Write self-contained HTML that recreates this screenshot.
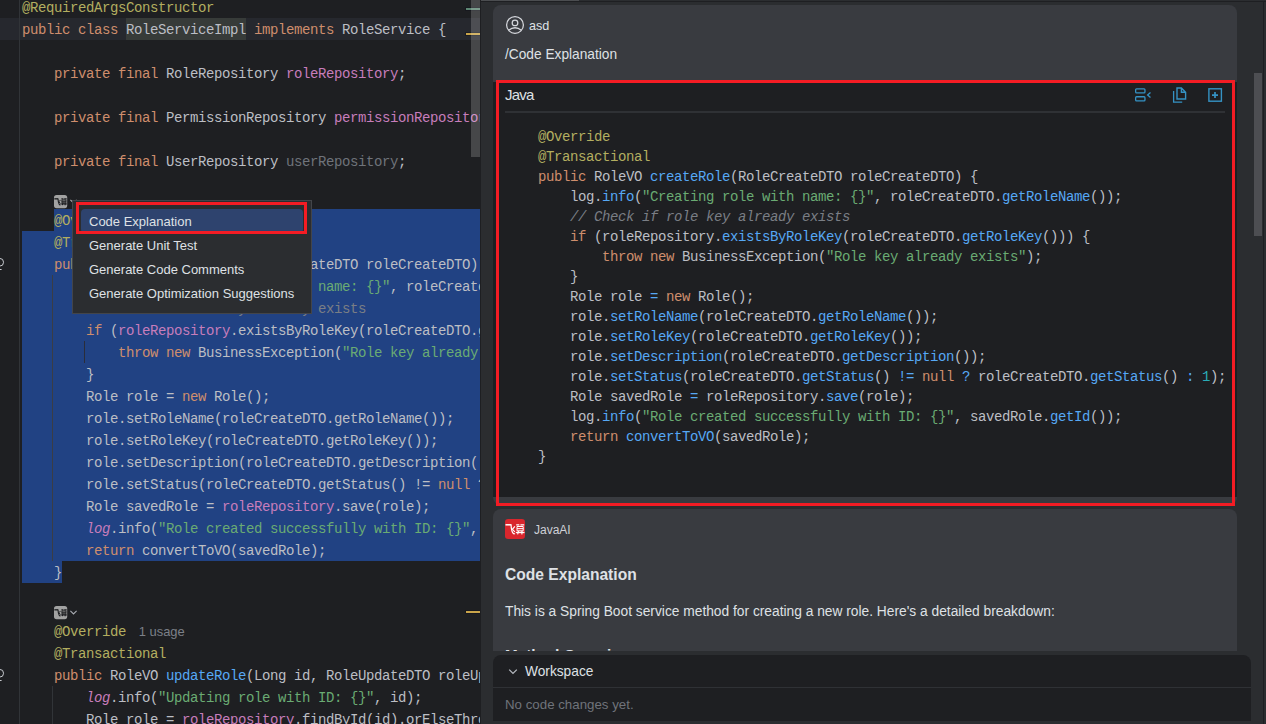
<!DOCTYPE html>
<html>
<head>
<meta charset="utf-8">
<title>IDE</title>
<style>
html,body{margin:0;padding:0;font-family:"Liberation Sans",sans-serif;}
body{width:1266px;height:724px;overflow:hidden;background:#2b2d30;position:relative;font-family:"Liberation Sans",sans-serif;color:#dfe1e5;}
.abs{position:absolute;}
/* ---------- left editor ---------- */
#ed{position:absolute;left:0;top:0;width:480px;height:724px;background:#1e1f22;overflow:hidden;}
.ln{position:absolute;left:22px;height:22px;line-height:22px;white-space:pre;font-family:"Liberation Mono",monospace;font-size:14px;letter-spacing:-0.4014px;color:#bcbec4;}
.kw{color:#cf8e6d;}
.an{color:#b3ae60;}
.fd{color:#c77dbb;}
.sf{color:#c77dbb;font-style:italic;}
.un{color:#6f737a;}
.fn{color:#56a8f5;}
.st{color:#6aab73;}
.cm{color:#7a7e85;}
.nu{color:#2aacb8;}
.op{color:#56a8f5;}
.sel{position:absolute;background:#214283;}
.guide{position:absolute;width:1px;background:#313438;}
/* ---------- popup ---------- */
#pop{position:absolute;left:72px;top:200px;width:240px;height:113.5px;box-sizing:border-box;background:#2b2d30;border:1px solid #43454a;}
.mi{position:absolute;left:17px;font-size:13px;line-height:24px;height:24px;color:#dfe1e5;white-space:pre;}
/* ---------- right panel ---------- */
#rp{position:absolute;left:480px;top:0;width:786px;height:724px;background:#2b2d30;overflow:hidden;}
.bub{position:absolute;background:#393b40;}
.rl{position:absolute;left:58px;height:20px;line-height:20px;white-space:pre;font-family:"Liberation Mono",monospace;font-size:14px;letter-spacing:-0.4014px;color:#bcbec4;}
.rl .cm{font-style:italic;}
.t{position:absolute;white-space:pre;}
</style>
</head>
<body>
<svg width="0" height="0" style="position:absolute">
  <defs>
    <g id="fs" fill="none" stroke-linecap="butt" stroke-linejoin="miter">
      <path d="M0.5 5.8 H6.2" stroke-width="1.5"/>
      <path d="M6 5.4 C6.2 9 6.6 12.4 8 14.2 C8.6 15 9.3 15.1 10 14.6" stroke-width="1.2"/>
      <path d="M9.9 7.4 L7.4 10.3 L9.9 12.9" stroke-width="1.1"/>
      <path d="M11.2 5.8 H14.4 M15.4 5.8 H19.2" stroke-width="1.3"/>
      <path d="M12 7.5 H18.2 V11.8 H12 Z M12 9.65 H18.2" stroke-width="1"/>
      <path d="M10.8 13.5 H19.5" stroke-width="1.3"/>
      <path d="M13.6 12 L12.6 15.4 M16.9 12 V15.4" stroke-width="1.1"/>
    </g>
    <g id="fs2" fill="none" stroke-linecap="butt" stroke-linejoin="miter">
      <path d="M0.5 5.8 H6.2" stroke-width="2"/>
      <path d="M6 5.4 C6.2 9 6.6 12.4 8 14.2 C8.6 15 9.3 15.1 10 14.6" stroke-width="1.7"/>
      <path d="M9.9 7.4 L7.4 10.3 L9.9 12.9" stroke-width="1.5"/>
      <path d="M11.2 5.8 H14.4 M15.4 5.8 H19.2" stroke-width="1.8"/>
      <path d="M12 7.5 H18.2 V11.8 H12 Z M12 9.65 H18.2" stroke-width="1.4"/>
      <path d="M10.8 13.5 H19.5" stroke-width="1.8"/>
      <path d="M13.6 12 L12.6 15.4 M16.9 12 V15.4" stroke-width="1.6"/>
    </g>
  </defs>
</svg>

<!-- ================= LEFT EDITOR ================= -->
<div id="ed">
  <!-- current line -->
  <div class="abs" style="left:0;top:18px;width:480px;height:22px;background:#26282e;"></div>
  <!-- identifier highlight -->
  <div class="abs" style="left:126px;top:18px;width:120px;height:22px;background:#373b39;"></div>
  <!-- gutter line -->
  <div class="abs" style="left:19px;top:0;width:1px;height:724px;background:#313438;"></div>

  <!-- selection -->
  <div class="sel" style="left:54px;top:209px;width:426px;height:22px;"></div>
  <div class="sel" style="left:22px;top:231px;width:458px;height:330px;"></div>
  <div class="sel" style="left:22px;top:561px;width:40px;height:22px;"></div>

  <!-- indent guides -->
  <div class="guide" style="left:52px;top:275px;height:286px;background:#3a3d45;"></div>
  <div class="guide" style="left:84px;top:341px;height:22px;background:#2a2d3a;"></div>
  <div class="guide" style="left:52px;top:686px;height:38px;"></div>

<div class="ln" style="top:-3px"><span class="an">@RequiredArgsConstructor</span></div>
<div class="ln" style="top:19px"><span class="kw">public class </span>RoleServiceImpl <span class="kw">implements </span>RoleService {</div>
<div class="ln" style="top:63px"><span class="kw">    private final </span>RoleRepository <span class="fd">roleRepository</span>;</div>
<div class="ln" style="top:107px"><span class="kw">    private final </span>PermissionRepository <span class="fd">permissionRepository</span>;</div>
<div class="ln" style="top:151px"><span class="kw">    private final </span>UserRepository <span class="un">userRepository</span>;</div>
<div class="ln" style="top:210px"><span class="an">    @Override</span></div>
<div class="ln" style="top:232px"><span class="an">    @Transactional</span></div>
<div class="ln" style="top:254px"><span class="kw">    public </span>RoleVO <span class="fn">createRole</span>(RoleCreateDTO roleCreateDTO) {</div>
<div class="ln" style="top:276px"><span class="sf">        log</span>.info(<span class="st">"Creating role with name: {}"</span>, roleCreateDTO.getRoleName());</div>
<div class="ln" style="top:298px"><span class="cm">        // Check if role key already exists</span></div>
<div class="ln" style="top:320px"><span class="kw">        if </span>(<span class="fd">roleRepository</span>.existsByRoleKey(roleCreateDTO.getRoleKey())) {</div>
<div class="ln" style="top:342px"><span class="kw">            throw new </span>BusinessException(<span class="st">"Role key already exists"</span>);</div>
<div class="ln" style="top:364px">        }</div>
<div class="ln" style="top:386px">        Role role = <span class="kw">new </span>Role();</div>
<div class="ln" style="top:408px">        role.setRoleName(roleCreateDTO.getRoleName());</div>
<div class="ln" style="top:430px">        role.setRoleKey(roleCreateDTO.getRoleKey());</div>
<div class="ln" style="top:452px">        role.setDescription(roleCreateDTO.getDescription());</div>
<div class="ln" style="top:474px">        role.setStatus(roleCreateDTO.getStatus() != <span class="kw">null </span>? roleCreateDTO.getStatus() : <span class="nu">1</span>);</div>
<div class="ln" style="top:496px">        Role savedRole = <span class="fd">roleRepository</span>.save(role);</div>
<div class="ln" style="top:518px"><span class="sf">        log</span>.info(<span class="st">"Role created successfully with ID: {}"</span>, savedRole.getId());</div>
<div class="ln" style="top:540px"><span class="kw">        return </span>convertToVO(savedRole);</div>
<div class="ln" style="top:562px">    }</div>
<div class="ln" style="top:621px"><span class="an">    @Override</span></div>
<div class="ln" style="top:643px"><span class="an">    @Transactional</span></div>
<div class="ln" style="top:665px"><span class="kw">    public </span>RoleVO <span class="fn">updateRole</span>(Long id, RoleUpdateDTO roleUpdateDTO) {</div>
<div class="ln" style="top:687px"><span class="sf">        log</span>.info(<span class="st">"Updating role with ID: {}"</span>, id);</div>
<div class="ln" style="top:709px">        Role role = <span class="fd">roleRepository</span>.findById(id).orElseThrow(() -&gt; new BusinessException("Role not found"));</div>

  <!-- "1 usage" inlay -->
  <div class="t" style="left:138.7px;top:621.51px;font-size:12.95px;line-height:20px;color:#7c8088;">1 usage</div>

  <!-- inlay icons -->
  <svg class="abs" style="left:54px;top:195px" width="26" height="14" viewBox="0 0 26 14"><rect x="0" y="0" width="13.2" height="13.2" rx="2.6" fill="#a2a2a2"/><g transform="scale(0.66)" stroke="#1c1d20"><use href="#fs2"/></g><path d="M16.4 4.9 L19.5 7.9 L22.6 4.9" fill="none" stroke="#a9acb3" stroke-width="1.1"/></svg>
  <svg class="abs" style="left:54px;top:606px" width="26" height="14" viewBox="0 0 26 14"><rect x="0" y="0" width="13.2" height="13.2" rx="2.6" fill="#a2a2a2"/><g transform="scale(0.66)" stroke="#1c1d20"><use href="#fs2"/></g><path d="M16.4 4.9 L19.5 7.9 L22.6 4.9" fill="none" stroke="#a9acb3" stroke-width="1.1"/></svg>

  <svg class="abs" style="left:0;top:255px" width="8" height="18" viewBox="0 0 8 18"><circle cx="-0.3" cy="7.25" r="3.85" fill="none" stroke="#c8cacf" stroke-width="1"/><path d="M0 14.5 H1.6" stroke="#c8cacf" stroke-width="1"/></svg>
  <svg class="abs" style="left:0;top:666px" width="8" height="18" viewBox="0 0 8 18"><circle cx="-0.3" cy="7.25" r="3.85" fill="none" stroke="#c8cacf" stroke-width="1"/><path d="M0 14.5 H1.6" stroke="#c8cacf" stroke-width="1"/></svg>
  <!-- scrollbar + stripes -->
  <div class="abs" style="left:466px;top:8px;width:14px;height:2px;background:#5d8673;box-shadow:0 0 0 1px rgba(12,14,24,0.4);"></div>
  <div class="abs" style="left:466px;top:33px;width:14px;height:2px;background:#c9a44a;box-shadow:0 0 0 1px rgba(12,14,24,0.4);"></div>
  <div class="abs" style="left:466px;top:611px;width:14px;height:2px;background:#c9a44a;box-shadow:0 0 0 1px rgba(12,14,24,0.4);"></div>
  <div class="abs" style="left:471px;top:0;width:8.5px;height:157px;background:rgba(255,255,255,0.18);"></div>
</div>

<!-- ================= POPUP ================= -->
<div id="pop">
  <div class="abs" style="left:8px;top:8px;width:222px;height:24px;border-radius:4px;background:#2e436e;"></div>
</div>
<div class="t" style="left:89px;top:211.70px;font-size:13px;line-height:20px;color:#dfe1e5;">Code Explanation</div>
<div class="t" style="left:89px;top:235.70px;font-size:13px;line-height:20px;color:#dfe1e5;">Generate Unit Test</div>
<div class="t" style="left:89px;top:259.70px;font-size:13px;line-height:20px;color:#dfe1e5;">Generate Code Comments</div>
<div class="t" style="left:89px;top:283.70px;font-size:13px;line-height:20px;color:#dfe1e5;">Generate Optimization Suggestions</div>
<div class="abs" style="left:76px;top:202px;width:230.5px;height:32px;box-sizing:border-box;border:3px solid #f41c24;"></div>

<!-- ================= RIGHT PANEL ================= -->
<div id="rp">
  <div class="abs" style="left:0;top:0;width:1px;height:724px;background:#1e1f22;"></div>
  <div class="abs" style="left:1px;top:1px;width:785px;height:1px;background:#1e1f22;"></div>
  <div class="abs" style="left:783px;top:1px;width:1px;height:723px;background:#1e1f22;"></div>
  <div class="abs" style="left:1px;top:0;width:98px;height:1px;background:#4b4d50;"></div>

  <!-- user bubble -->
  <div class="bub" style="left:13px;top:4.5px;width:744px;height:500.5px;border-radius:8px;"></div>
  <svg class="abs" style="left:24px;top:14px" width="22" height="22" viewBox="24 14 22 22" fill="none" stroke="#d5d7dc" stroke-width="1.25">
    <circle cx="35" cy="24.9" r="8.4"/><circle cx="35" cy="22.9" r="2.8"/><path d="M28.6 30.3 Q35 25.2 41.4 30.3"/>
  </svg>
  <div class="t" style="left:49px;top:15.73px;font-size:12.6px;line-height:20px;color:#dfe1e5;">asd</div>
  <div class="t" style="left:25px;top:45.04px;font-size:13.73px;line-height:20px;color:#dfe1e5;">/Code Explanation</div>

  <!-- code box -->
  <div class="abs" style="left:13px;top:82px;width:744px;height:415px;background:#1e1f22;"></div>
  <div class="t" style="left:25px;top:84.80px;font-size:15px;line-height:20px;color:#dfe1e5;letter-spacing:-0.8px;">Java</div>
  <div class="abs" style="left:25px;top:111px;width:720px;height:2px;background:#2f3135;"></div>
  <svg class="abs" style="left:650px;top:84px" width="100" height="24" viewBox="650 84 100 24" fill="none" stroke="#3592c4" stroke-width="1.3">
    <rect x="655.65" y="88.95" width="9.3" height="3.9" rx="0.9"/><rect x="655.65" y="96.75" width="9.3" height="4.2" rx="0.9"/>
    <path d="M670.5 92.5 L667.6 95 L670.5 97.5"/>
    <path d="M697 88 H701.4 L705.6 92.2 V99 H697 Z M701.4 88 V92.2 H705.6" stroke-width="1.4"/>
    <path d="M693.6 91 V102.2 H702.2"/>
    <rect x="728.9" y="88.8" width="12.5" height="12.4" stroke-width="1.4"/>
    <path d="M732 95.1 H738 M735 92.1 V98.1" stroke-width="1.7"/>
  </svg>
<div class="rl" style="top:127px"><span class="an">@Override</span></div>
<div class="rl" style="top:147px"><span class="an">@Transactional</span></div>
<div class="rl" style="top:167px"><span class="kw">public </span>RoleVO <span class="fn">createRole</span>(RoleCreateDTO roleCreateDTO) {</div>
<div class="rl" style="top:187px">    log.<span class="fn">info</span>(<span class="st">"Creating role with name: {}"</span>, roleCreateDTO.<span class="fn">getRoleName</span>());</div>
<div class="rl" style="top:207px"><span class="cm">    // Check if role key already exists</span></div>
<div class="rl" style="top:227px"><span class="kw">    if </span>(roleRepository.<span class="fn">existsByRoleKey</span>(roleCreateDTO.<span class="fn">getRoleKey</span>())) {</div>
<div class="rl" style="top:247px"><span class="kw">        throw new </span>BusinessException(<span class="st">"Role key already exists"</span>);</div>
<div class="rl" style="top:267px">    }</div>
<div class="rl" style="top:287px">    Role role <span class="op">= </span><span class="kw">new </span>Role();</div>
<div class="rl" style="top:307px">    role.<span class="fn">setRoleName</span>(roleCreateDTO.<span class="fn">getRoleName</span>());</div>
<div class="rl" style="top:327px">    role.<span class="fn">setRoleKey</span>(roleCreateDTO.<span class="fn">getRoleKey</span>());</div>
<div class="rl" style="top:347px">    role.<span class="fn">setDescription</span>(roleCreateDTO.<span class="fn">getDescription</span>());</div>
<div class="rl" style="top:367px">    role.<span class="fn">setStatus</span>(roleCreateDTO.<span class="fn">getStatus</span>() <span class="op">!= </span><span class="kw">null </span><span class="op">? </span>roleCreateDTO.<span class="fn">getStatus</span>() <span class="op">: </span><span class="nu">1</span>);</div>
<div class="rl" style="top:387px">    Role savedRole <span class="op">= </span>roleRepository.<span class="fn">save</span>(role);</div>
<div class="rl" style="top:407px">    log.<span class="fn">info</span>(<span class="st">"Role created successfully with ID: {}"</span>, savedRole.<span class="fn">getId</span>());</div>
<div class="rl" style="top:427px"><span class="kw">    return </span><span class="fn">convertToVO</span>(savedRole);</div>
<div class="rl" style="top:447px">}</div>
  <!-- red annotation -->
  <div class="abs" style="left:15.8px;top:79.9px;width:739.5px;height:426.1px;box-sizing:border-box;border:3.3px solid #f41c24;"></div>

  <!-- AI bubble -->
  <div class="bub" style="left:13px;top:509px;width:744px;height:142px;border-radius:8px 8px 0 0;overflow:hidden;"><div class="t" style="left:12px;top:135.70px;font-size:15.3px;line-height:20px;color:#dfe1e5;font-weight:bold;">Method Overview</div></div>
  <svg class="abs" style="left:25px;top:519px" width="20" height="20" viewBox="0 0 20 20"><rect width="20" height="20" rx="3.2" fill="#d9262d"/><g stroke="#ffffff"><use href="#fs"/></g></svg>
  <div class="t" style="left:54px;top:519.84px;font-size:12px;line-height:20px;color:#ced0d6;">JavaAI</div>
  <div class="t" style="left:25px;top:564.59px;font-size:15.6px;line-height:20px;color:#dfe1e5;font-weight:bold;">Code Explanation</div>
  <div class="t" style="left:25px;top:602.23px;font-size:13.77px;line-height:20px;color:#dfe1e5;">This is a Spring Boot service method for creating a new role. Here's a detailed breakdown:</div>

  <!-- scrollbar -->
  <div class="abs" style="left:774px;top:73px;width:8px;height:163px;background:#4d4e52;"></div>

  <!-- workspace -->
  <div class="abs" style="left:13px;top:655px;width:758px;height:66px;border-radius:8px 8px 0 0;background:#1e1f22;"></div>
  <div class="abs" style="left:13px;top:687px;width:758px;height:1px;background:#2f3135;"></div>
  <svg class="abs" style="left:26px;top:664px" width="14" height="14" viewBox="26 664 14 14"><path d="M29.2 669.6 L33 673.4 L36.8 669.6" fill="none" stroke="#b4b8bf" stroke-width="1.3"/></svg>
  <div class="t" style="left:45px;top:661.75px;font-size:13.72px;line-height:20px;color:#dfe1e5;">Workspace</div>
  <div class="t" style="left:25px;top:695.19px;font-size:13.3px;line-height:20px;color:#6f737a;">No code changes yet.</div>
</div>

</body>
</html>
